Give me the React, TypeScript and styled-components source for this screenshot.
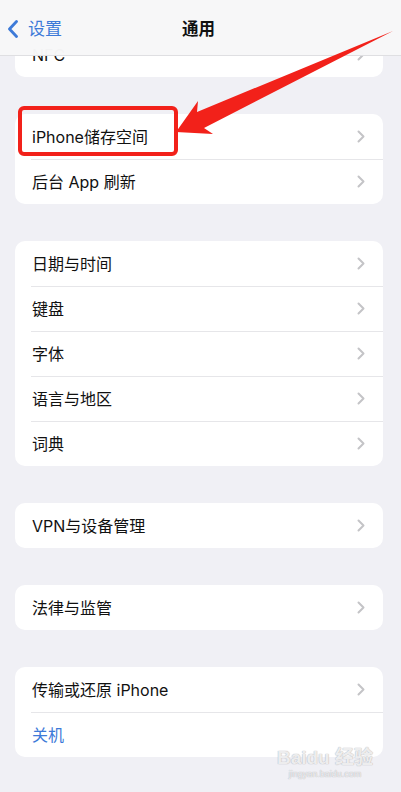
import React from "react";
import styled, { createGlobalStyle } from "styled-components";

const GlobalStyle = createGlobalStyle`
  body {
    margin: 0;
    background: #f0f0f5;
    font-family: Inter, "Noto Sans CJK SC", sans-serif;
  }
`;

const Page = styled.div`
  position: relative;
  width: 401px;
  height: 792px;
  overflow: hidden;
  background: #f0f0f5;
`;

const NavBar = styled.div`
  position: absolute;
  top: 0;
  left: 0;
  right: 0;
  height: 53px;
  z-index: 2;
  display: grid;
  grid-template-columns: 1fr auto 1fr;
  align-items: center;
  padding-top: 2px;
  background: rgba(247, 247, 248, 0.98);
  border-bottom: 1px solid #dfdfe2;
`;

const BackButton = styled.div`
  display: flex;
  align-items: center;
  gap: 9px;
  padding-left: 7px;
  color: #3d7ad8;
  font-size: 17px;
  line-height: 20px;
`;

const Title = styled.div`
  font-size: 16.5px;
  font-weight: 700;
  color: #111;
  line-height: 20px;
  margin-right: 4px;
`;

const Content = styled.div`
  display: flex;
  flex-direction: column;
  gap: 37px;
  padding: 32px 18px 0 15px;
`;

const Group = styled.div`
  background: #fff;
  border-radius: 10px;
  overflow: hidden;
`;

const Row = styled.div<{ $first?: boolean }>`
  position: relative;
  height: 45px;
  display: flex;
  align-items: center;
  justify-content: space-between;
  padding: 0 18px 0 17px;

  &::before {
    content: "";
    display: ${(p) => (p.$first ? "none" : "block")};
    position: absolute;
    top: 0;
    left: 16px;
    right: 0;
    height: 1px;
    background: #e6e6e9;
  }
`;

const Label = styled.span<{ $accent?: boolean }>`
  font-size: 16px;
  line-height: 20px;
  color: ${(p) => (p.$accent ? "#3d7ad8" : "#111")};
`;

const Overlay = styled.svg`
  position: absolute;
  inset: 0;
  z-index: 3;
  pointer-events: none;
`;

const Watermark = styled.div`
  position: absolute;
  right: 28px;
  bottom: 12px;
  z-index: 3;
  display: flex;
  flex-direction: column;
  align-items: center;
  color: rgba(255, 255, 255, 0.75);
  text-shadow: 0 0 1px #b9b9bd, 0 0 1px #b9b9bd;
  font-family: "Liberation Sans", "Noto Sans CJK SC", sans-serif;
  pointer-events: none;
`;

const MarkTop = styled.span`
  font-size: 19px;
  font-weight: 700;
  line-height: 20px;
`;

const MarkSub = styled.span`
  font-size: 9px;
  line-height: 12px;
`;

const Chevron = () => (
  <svg width="8" height="13" viewBox="0 0 8 13">
    <path d="M1.5 1.5 L6.5 6.5 L1.5 11.5" fill="none" stroke="#c4c4c7" strokeWidth="2" strokeLinecap="round" strokeLinejoin="round" />
  </svg>
);

const groups: { label: string; accent?: boolean; noArrow?: boolean }[][] = [
  [{ label: "NFC" }],
  [{ label: "iPhone储存空间" }, { label: "后台 App 刷新" }],
  [
    { label: "日期与时间" },
    { label: "键盘" },
    { label: "字体" },
    { label: "语言与地区" },
    { label: "词典" },
  ],
  [{ label: "VPN与设备管理" }],
  [{ label: "法律与监管" }],
  [{ label: "传输或还原 iPhone" }, { label: "关机", accent: true, noArrow: true }],
];

export default function App() {
  return (
    <Page>
      <GlobalStyle />
      <NavBar>
        <BackButton>
          <svg width="12" height="18" viewBox="0 0 12 18">
            <path d="M9.5 1.5 L2.5 9 L9.5 16.5" fill="none" stroke="#3d7ad8" strokeWidth="2.8" strokeLinecap="round" strokeLinejoin="round" />
          </svg>
          设置
        </BackButton>
        <Title>通用</Title>
        <div />
      </NavBar>
      <Content>
        {groups.map((rows, gi) => (
          <Group key={gi}>
            {rows.map((r, ri) => (
              <Row key={ri} $first={ri === 0}>
                <Label $accent={r.accent}>{r.label}</Label>
                {!r.noArrow && <Chevron />}
              </Row>
            ))}
          </Group>
        ))}
      </Content>
      <Overlay width="401" height="792" viewBox="0 0 401 792">
        <rect x="20" y="108" width="156" height="46" rx="4" fill="none" stroke="#f2211a" strokeWidth="4" />
        <polygon points="176,132 198,101 197,112 393,31 204,128 213,134" fill="#f2211a" />
      </Overlay>
      <Watermark>
        <MarkTop>Baidu 经验</MarkTop>
        <MarkSub>jingyan.baidu.com</MarkSub>
      </Watermark>
    </Page>
  );
}
